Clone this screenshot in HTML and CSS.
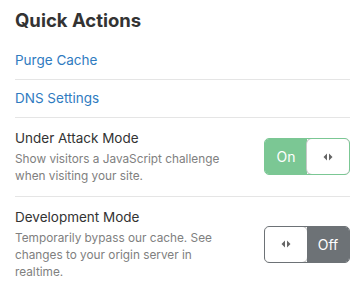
FILE: index.html
```html
<!DOCTYPE html>
<html lang="en">
<head>
    <meta charset="UTF-8">
    <title>Quick Actions</title>
    <link rel="stylesheet" href="styles.css">
</head>
<body>
    <section class="card">
        <h2 class="card-title">Quick Actions</h2>
        <ul class="actions">
            <li class="action"><a href="#">Purge Cache</a></li>
            <li class="action"><a href="#">DNS Settings</a></li>
            <li class="action setting">
                <div class="setting-text">
                    <h3>Under Attack Mode</h3>
                    <p>Show visitors a JavaScript challenge when visiting your site.</p>
                </div>
                <div class="toggle is-on">
                    <span class="toggle-label">On</span>
                    <span class="toggle-knob">
                        <svg width="10" height="8" viewBox="0 0 10 8"><path d="M4 0.5 L0.5 4 L4 7.5 Z M6 0.5 L9.5 4 L6 7.5 Z" fill="#666"/></svg>
                    </span>
                </div>
            </li>
            <li class="action setting">
                <div class="setting-text">
                    <h3>Development Mode</h3>
                    <p>Temporarily bypass our cache. See changes to your origin server in realtime.</p>
                </div>
                <div class="toggle is-off">
                    <span class="toggle-knob">
                        <svg width="10" height="8" viewBox="0 0 10 8"><path d="M4 0.5 L0.5 4 L4 7.5 Z M6 0.5 L9.5 4 L6 7.5 Z" fill="#666"/></svg>
                    </span>
                    <span class="toggle-label">Off</span>
                </div>
            </li>
        </ul>
    </section>
</body>
</html>
```

FILE: styles.css
```css
* {
    margin: 0;
    padding: 0;
    box-sizing: border-box;
}
body {
    font-family: 'Inter', 'Liberation Sans', sans-serif;
    background: #fff;
    color: #333;
    padding: 8px 12px 0 15px;
}
.card-title {
    font-size: 18.5px;
    font-weight: 700;
    line-height: 24px;
    color: #333;
    margin-bottom: 10px;
}
.actions {
    list-style: none;
}
.action {
    border-bottom: 1px solid #e5e5e5;
    padding: 9px 0;
    font-size: 13.5px;
    line-height: 19px;
}
.action a {
    color: #2f7bbf;
    text-decoration: none;
}
.action:last-child {
    border-bottom: none;
}
.setting {
    display: flex;
    align-items: center;
    justify-content: space-between;
    padding: 10px 0 11px;
}
.setting-text h3 {
    font-size: 13.5px;
    font-weight: 400;
    line-height: 20px;
    color: #333;
    margin-bottom: 3px;
}
.setting-text p {
    font-size: 11.8px;
    line-height: 17px;
    color: #808080;
    max-width: 215px;
}
.toggle {
    display: flex;
    width: 86px;
    height: 37px;
    border: 1px solid #c8c8c8;
    border-radius: 5px;
    overflow: hidden;
    flex-shrink: 0;
}
.toggle span {
    flex: 1;
    display: flex;
    align-items: center;
    justify-content: center;
}
.toggle-label {
    font-size: 14px;
    color: #fff;
}
.is-on .toggle-label {
    background: #7bc794;
}
.is-on {
    border-color: #7bc794;
}
.is-off .toggle-label {
    background: #6d7276;
}
.is-off {
    border-color: #6d7276;
}
.toggle-knob {
    background: #fff;
    border-radius: 5px;
    box-shadow: 0 0 0 1px #c8c8c8;
}
```
